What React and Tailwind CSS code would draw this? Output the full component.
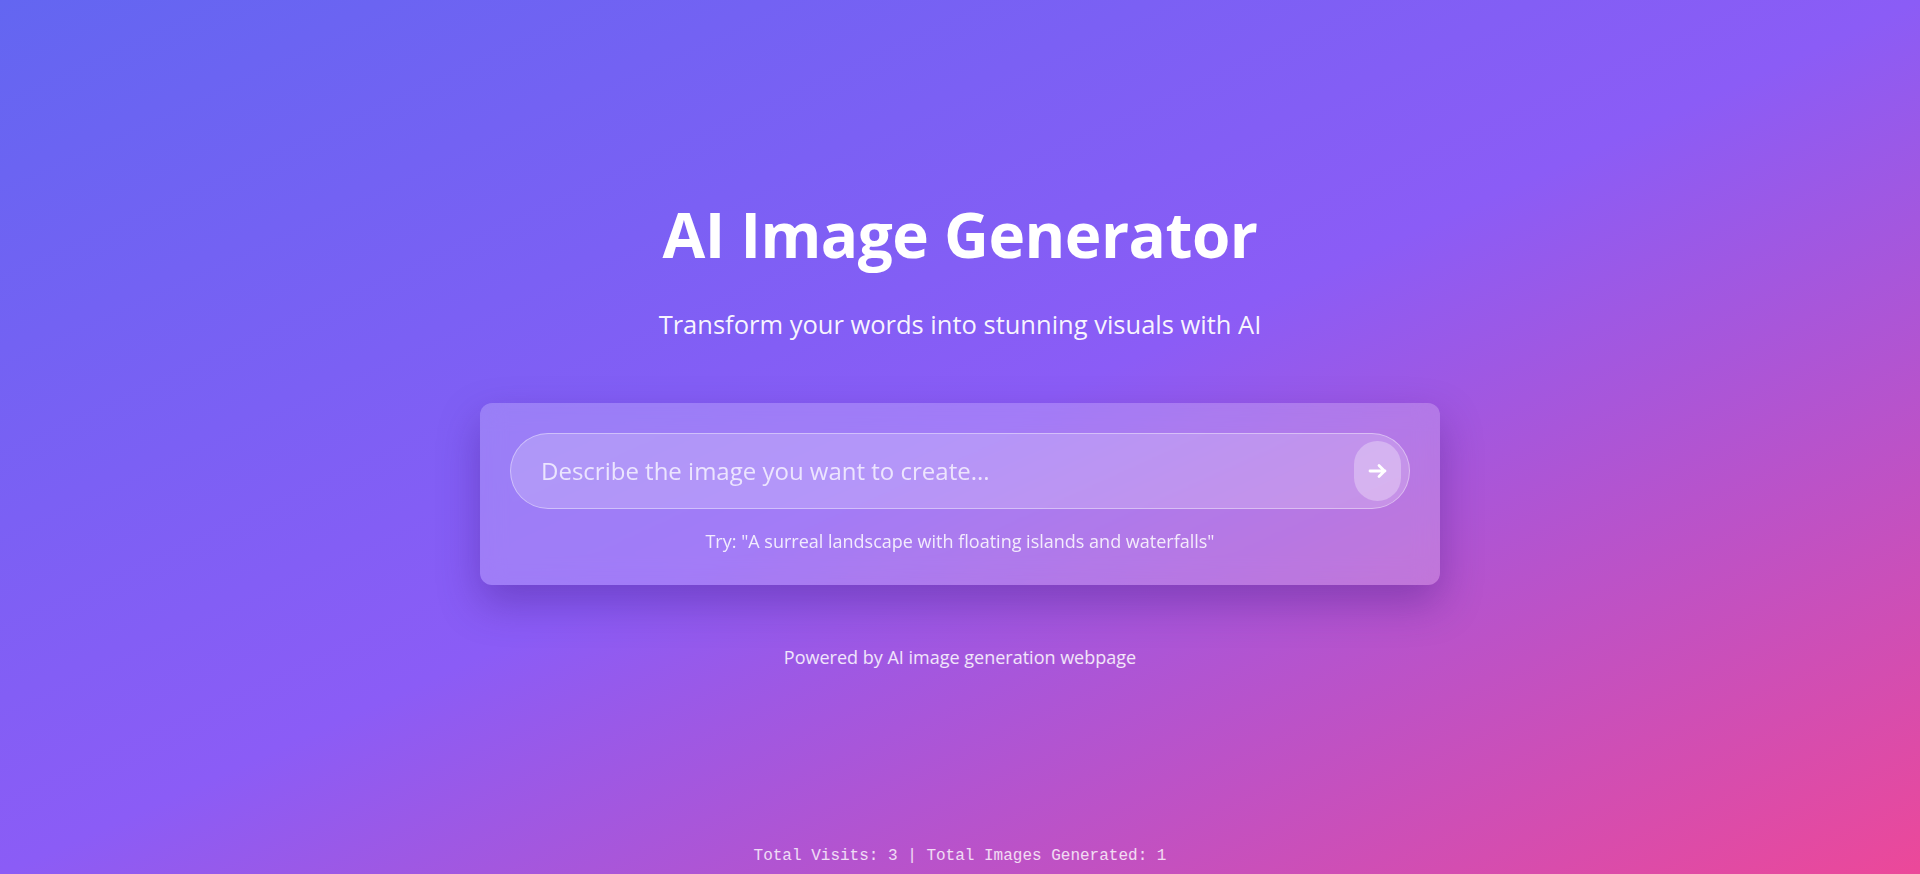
import React, { useState } from "react";

export default function App() {
  const [prompt, setPrompt] = useState("");

  return (
    <div className="h-screen flex flex-col bg-[linear-gradient(to_bottom_right,#6366f1,#8b5cf6,#ec4899)] font-['Open_Sans','Noto_Sans',sans-serif] text-white overflow-hidden">
      <main className="flex-1 flex flex-col items-center pt-[198px]">
        <h1 className="text-[62px] leading-[72px] font-bold tracking-[-0.5px]">
          AI Image Generator
        </h1>
        <p className="mt-[37px] text-[25.5px] leading-[34px] text-white/95">
          Transform your words into stunning visuals with AI
        </p>

        {/* prompt card */}
        <div className="mt-[62px] w-[960px] px-[30px] pt-[30px] pb-[32px] rounded-xl bg-white/20 backdrop-blur-md shadow-[0_18px_40px_rgba(60,20,120,0.35)]">
          <form
            onSubmit={(e) => e.preventDefault()}
            className="flex items-center h-[76px] rounded-full border border-white/40 bg-white/20 pl-[30px] pr-[8px] py-[7px]"
          >
            <input
              type="text"
              value={prompt}
              onChange={(e) => setPrompt(e.target.value)}
              placeholder="Describe the image you want to create..."
              className="flex-1 bg-transparent text-[24px] text-white placeholder:text-white/75 outline-none"
            />
            <button
              type="submit"
              className="w-[47px] h-[60px] rounded-full bg-white/30 flex items-center justify-center"
            >
              <svg width="20" height="16" viewBox="0 0 20 16" fill="none">
                <path
                  d="M2 8h15M11 2.5 16.5 8 11 13.5"
                  stroke="white"
                  strokeWidth="2.8"
                  strokeLinecap="round"
                  strokeLinejoin="round"
                />
              </svg>
            </button>
          </form>
          <p className="mt-5 text-center text-[18px] leading-6 text-white/85">
            Try: "A surreal landscape with floating islands and waterfalls"
          </p>
        </div>

        <p className="mt-[60px] text-[18px] leading-6 text-white/85">
          Powered by AI image generation webpage
        </p>
      </main>

      <footer className="pb-[10px] text-center font-['Liberation_Mono',monospace] text-[16px] leading-4 text-white/80">
        Total Visits: 3 | Total Images Generated: 1
      </footer>
    </div>
  );
}
